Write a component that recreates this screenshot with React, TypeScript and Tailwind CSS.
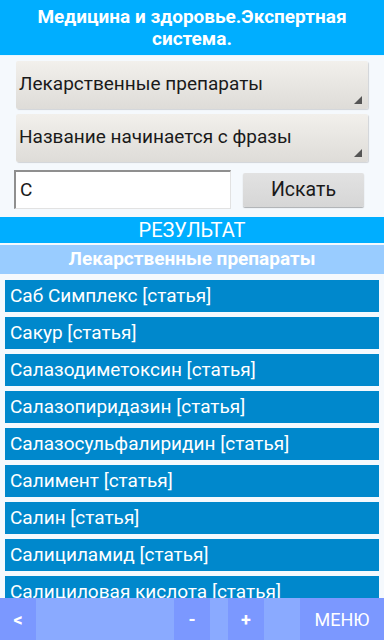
import React from "react";

const items = [
    "Саб Симплекс [статья]",
    "Сакур [статья]",
    "Салазодиметоксин [статья]",
    "Салазопиридазин [статья]",
    "Салазосульфалиридин [статья]",
    "Салимент [статья]",
    "Салин [статья]",
    "Салициламид [статья]",
    "Салициловая кислота [статья]",
];

const Spinner: React.FC<{ label: string }> = ({label}) => (
    <div
        className="relative mx-4 h-[48px] flex items-center pl-[3px] rounded-[2px] bg-gradient-to-b from-[#f2f0ec] to-[#dedcd8] shadow-[1px_1px_1px_rgba(0,0,0,0.15)] text-[19px] text-[#1a1a1a]">
        <span className="-mt-[2px]">{label}</span>
        <svg className="absolute right-[6px] bottom-[5px]" width="8" height="8" viewBox="0 0 8 8">
            <polygon points="8,0 8,8 0,8" fill="#555"/>
        </svg>
    </div>
);

export default function App() {
    return (
        <div
            className="relative h-[640px] w-[384px] overflow-hidden bg-[#f5f9fd]"
            style={{fontFamily: "Roboto, 'Noto Sans', sans-serif"}}
        >
            {/* Header */}
            <div
                className="h-[56px] bg-[#00aeff] text-white font-bold text-[19px] leading-[22px] text-center pt-[6px] border-b border-[#e6f6ff]">
                Медицина и здоровье.Экспертная
                <br/>
                система.
            </div>

            <div className="mt-[5px] flex flex-col gap-[5px]">
                <Spinner label="Лекарственные препараты"/>
                <Spinner label="Название начинается с фразы"/>
            </div>

            {/* Search row */}
            <div className="mt-[8px] flex items-center pl-[14px]">
                <div
                    className="h-[39px] w-[217px] bg-white border-t-2 border-l-2 border-[#8f8f8f] border-r border-b border-r-[#e2e2e2] border-b-[#e2e2e2] flex items-center pl-[4px] text-[19px] text-[#1a1a1a]">
                    С
                </div>
                <div
                    className="ml-[12px] h-[34px] w-[121px] rounded-[2px] bg-gradient-to-b from-[#e2e2e2] to-[#d6d6d6] shadow-[0_1px_1px_rgba(0,0,0,0.3)] flex items-center justify-center text-[19.5px] text-[#1a1a1a]">
                    Искать
                </div>
            </div>

            {/* Results */}
            <div
                className="mt-[8px] h-[26px] bg-[#00aeff] text-white text-[20px] flex items-center justify-center">
                РЕЗУЛЬТАТ
            </div>
            <div
                className="mt-[2px] h-[29px] bg-[#99ccff] text-white font-bold text-[19px] flex items-center justify-center">
                Лекарственные препараты
            </div>

            <div className="mt-[6px] flex flex-col gap-[5px] px-[5px]">
                {items.map((item) => (
                    <div key={item}
                         className="h-[32px] bg-[#0088cc] text-white text-[19px] flex items-center pl-[5px]">
                        {item}
                    </div>
                ))}
            </div>

            {/* Bottom bar */}
            <div className="absolute bottom-0 left-0 right-0 h-[42px] flex text-white text-[18px]">
                <div className="w-[36px] bg-[#7b98ff] flex items-center justify-center font-bold">&lt;</div>
                <div className="w-[138px] bg-[#8aaaff]"></div>
                <div className="w-[36px] bg-[#7b98ff] flex items-center justify-center font-bold">-</div>
                <div className="w-[18px] bg-[#8aaaff]"></div>
                <div className="w-[36px] bg-[#7b98ff] flex items-center justify-center font-bold">+</div>
                <div className="w-[36px] bg-[#8aaaff]"></div>
                <div className="flex-1 bg-[#7b98ff] flex items-center justify-center">МЕНЮ</div>
            </div>
        </div>
    );
}
